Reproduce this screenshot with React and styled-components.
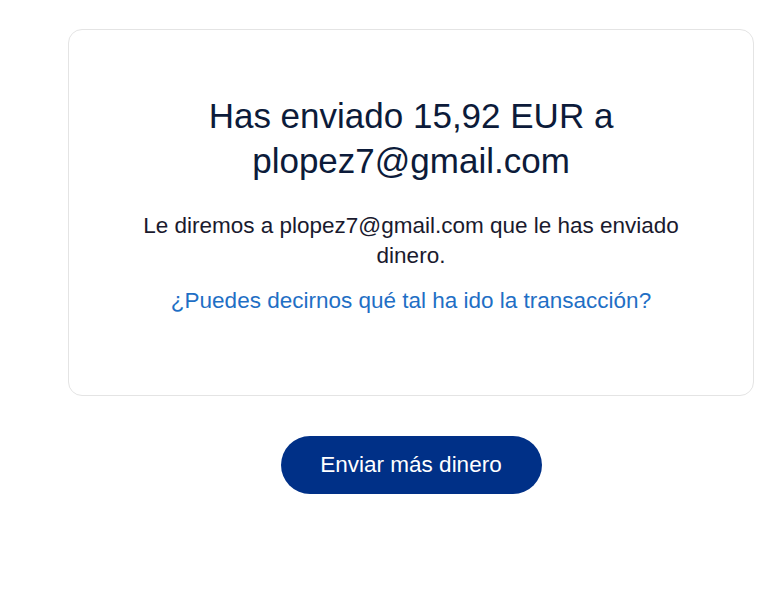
import React from 'react'
import styled, { createGlobalStyle } from 'styled-components'

const GlobalStyle = createGlobalStyle`
  html, body {
    margin: 0;
    padding: 0;
    background: #fff;
    font-family: "Liberation Sans", Arial, sans-serif;
  }
`

const App = () => (
  <>
    <GlobalStyle />
    <Wrapper>
      <Card>
        <Title>
          Has enviado 15,92 EUR a
          <br />
          plopez7@gmail.com
        </Title>
        <Text>Le diremos a plopez7@gmail.com que le has enviado dinero.</Text>
        <FeedbackLink href="#">¿Puedes decirnos qué tal ha ido la transacción?</FeedbackLink>
      </Card>
      <Button>Enviar más dinero</Button>
    </Wrapper>
  </>
)

export default App

const Wrapper = styled.div`
  width: 686px;
  margin: 29px 0 0 68px;
  display: flex;
  flex-direction: column;
  align-items: center;
`

const Card = styled.div`
  box-sizing: border-box;
  width: 100%;
  height: 367px;
  border: 1px solid #e4e4e4;
  border-radius: 14px;
  padding: 63px 40px 0;
  display: flex;
  flex-direction: column;
  align-items: center;
  text-align: center;
`

const Title = styled.h1`
  margin: 0;
  font-size: 35px;
  font-weight: 400;
  line-height: 45px;
  color: #0c1b3a;
`

const Text = styled.p`
  margin: 28px 0 0;
  max-width: 580px;
  font-size: 22.5px;
  line-height: 30px;
  color: #1a1a2e;
`

const FeedbackLink = styled.a`
  margin-top: 15px;
  font-size: 22.5px;
  line-height: 30px;
  color: #1f6fc5;
  text-decoration: none;
`

const Button = styled.button`
  margin-top: 40px;
  width: 261px;
  height: 58px;
  border: none;
  border-radius: 29px;
  background: #003087;
  color: #fff;
  font-family: "Liberation Sans", Arial, sans-serif;
  font-size: 22.5px;
  cursor: pointer;
`
